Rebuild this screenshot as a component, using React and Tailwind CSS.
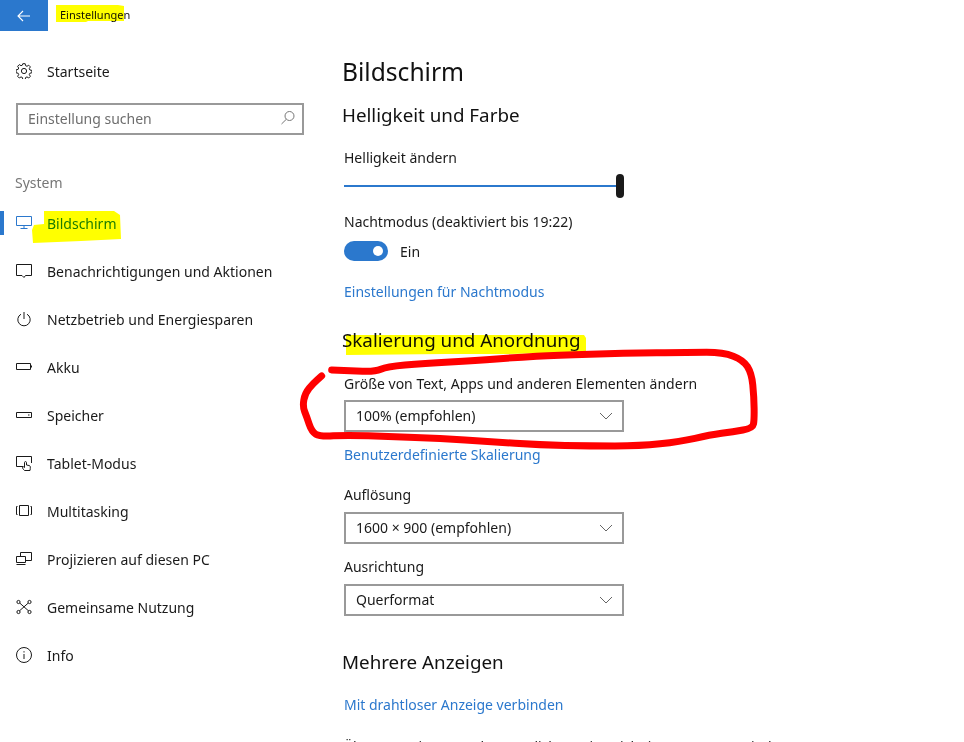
const F = "font-['Noto_Sans','Open_Sans',sans-serif]";

const I = ({ children, className = "text-[#1a1a1a]" }) => (
  <svg viewBox="0 0 16 16" width="16" height="16" fill="none" stroke="currentColor" strokeWidth="1" className={"shrink-0 " + className}>{children}</svg>
);

const icons = {
  display: <I className="text-[#2b78cd]"><path d="M0.5 1.5h15v9h-15zM8 10.5v3M4.5 13.5h7" /></I>,
  note: <I><path d="M0.5 1.5h15v11H9.5l-1.5 2-2-2H0.5z" /></I>,
  power: <I><path d="M8 1v7M5 3.2a6.2 6.2 0 1 0 6 0" /></I>,
  batt: <I><path d="M0.5 4.5h14v6h-14zM15.5 6.5v2" /></I>,
  store: <I><path d="M0.5 5.5h15v5h-15zM12 8h1.5" /></I>,
  tablet: <I><path d="M7 11.5H0.5v-10h15v6.5" /><path d="M8.5 15.5c-1-1-2-2-2-3s1-1 2 0V7.5c0-1.2 2-1.2 2 0v2.5l3 .6c1 .4 1 2 .5 4.9z" fill="#fff" /></I>,
  multi: <I><path d="M3.5 2.5h9v10h-9zM1.5 3.5H0.5v8h1M14.5 3.5h1v8h-1" /></I>,
  proj: <I><path d="M4.5 5V1.5h11v8H10M0.5 5.5h9v6h-9zM0.5 13.5h9" /></I>,
  share: <I><circle cx="2.5" cy="3" r="1.6" /><circle cx="13.5" cy="3" r="1.6" /><circle cx="2.5" cy="13" r="1.6" /><circle cx="13.5" cy="13" r="1.6" /><path d="M3.7 4l9 8M12.3 4l-9 8" /></I>,
  info: <I><circle cx="8" cy="8" r="7.5" /><path d="M8 7v5M8 4.2v1.3" /></I>,
};

const nav = [
  ["display", "Bildschirm", true],
  ["note", "Benachrichtigungen und Aktionen"],
  ["power", "Netzbetrieb und Energiesparen"],
  ["batt", "Akku"],
  ["store", "Speicher"],
  ["tablet", "Tablet-Modus"],
  ["multi", "Multitasking"],
  ["proj", "Projizieren auf diesen PC"],
  ["share", "Gemeinsame Nutzung"],
  ["info", "Info"],
];

const Select = ({ value, className }) => (
  <div className={"flex h-8 w-[280px] items-center justify-between border-2 border-[#999999] pb-[2px] pl-[10px] pr-[9px] text-[14px] text-[#1a1a1a] " + className}>
    <span>{value}</span>
    <svg width="14" height="8" viewBox="0 0 14 8" fill="none" stroke="#666" strokeWidth="1" className="translate-y-px"><path d="M1 1l6 6 6-6" /></svg>
  </div>
);

const Label = ({ children, className }) => <div className={"h-5 text-[14px] leading-[21px] text-[#1a1a1a] whitespace-nowrap " + className}>{children}</div>;
const Lnk = ({ children, className }) => <div className={"h-5 text-[14px] leading-[21px] text-[#2b78cd] whitespace-nowrap " + className}>{children}</div>;
const H2 = ({ children, className }) => <h2 className={"-ml-0.5 h-7 text-[18.8px] leading-7 text-[#111] whitespace-nowrap " + className}>{children}</h2>;

const redPts = [[125,150],[180,152],[255,155],[290,140],[400,130],[560,122],[680,112],[800,105],[1000,100],[1200,97],[1300,97],[1360,120],[1385,160],[1392,230],[1393,300],[1388,325],[1330,335],[1260,345],[1170,365],[1050,378],[900,378],[750,375],[600,365],[450,355],[300,350],[170,345],[90,350],[65,335],[50,290],[38,260],[45,220],[70,190],[95,168]];
const redPath = redPts.reduce((d, p, i) => {
  if (i === 0) return `M${p[0]} ${p[1]}`;
  const q = redPts[i - 1];
  return i === 1 ? d : `${d} Q${q[0]} ${q[1]} ${(q[0] + p[0]) / 2} ${(q[1] + p[1]) / 2}`;
}, "") + ` L95 168`;

export default function App() {
  return (
    <div className={"relative h-[742px] w-[964px] overflow-hidden bg-white " + F}>
      <header className="flex h-[31px] items-center">
        <div className="flex h-[31px] w-12 items-center justify-center bg-[#2b78cd]">
          <svg width="14" height="12" viewBox="0 0 14 12" fill="none" stroke="#fff" strokeWidth="1.1"><path d="M13 6H1M6 1L1 6l5 5" /></svg>
        </div>
        <span className="ml-3 text-[11px] text-[#111]">Einstellungen</span>
      </header>
      <div className="flex">
        <aside className="w-[342px] shrink-0">
          <div className="mt-[24px] flex h-8 items-center gap-[15px] pl-4 text-[14px] text-[#1a1a1a]">
            <svg width="16" height="16" viewBox="0 0 16 16" fill="none" stroke="#1a1a1a" strokeWidth="1" className="shrink-0">
              <circle cx="8" cy="8" r="2.6" />
              <path d="M6.8 0.7h2.4l.4 2 1.4.6 1.7-1.1 1.7 1.7-1.1 1.7.6 1.4 2 .4v2.4l-2 .4-.6 1.4 1.1 1.7-1.7 1.7-1.7-1.1-1.4.6-.4 2H6.8l-.4-2-1.4-.6-1.7 1.1-1.7-1.7 1.1-1.7-.6-1.4-2-.4V6.8l2-.4.6-1.4-1.1-1.7 1.7-1.7 1.7 1.1 1.4-.6z" />
            </svg>
            <span>Startseite</span>
          </div>
          <div className="ml-4 mt-[16px] flex h-8 w-[288px] items-center justify-between border-2 border-[#999999] pb-[2px] pl-[10px] pr-[6px] text-[14px] text-[#6e6e6e]">
            <span>Einstellung suchen</span>
            <svg width="16" height="16" viewBox="0 0 16 16" fill="none" stroke="#777" strokeWidth="1"><circle cx="9.5" cy="6" r="4.5" /><path d="M6.3 9.3L1.5 14" /></svg>
          </div>
          <div className="ml-[15px] mt-[38px] h-5 text-[14px] leading-5 text-[#777]">System</div>
          <nav className="mt-[6px]">
            {nav.map(([icon, label, active]) => (
              <div key={label} className={"flex h-12 items-center gap-[15px] pl-4 text-[14px] " + (active ? "text-[#2b78cd]" : "text-[#1a1a1a]")}>
                {icons[icon]}
                <span className={"whitespace-nowrap " + (active ? "text-[#1d7d10]" : "")}>{label}</span>
              </div>
            ))}
          </nav>
        </aside>
        <main className="min-w-0 flex-1 pl-[2px]">
          <h1 className="-ml-0.5 mt-[21px] h-10 text-[24.6px] leading-10 text-[#111]">Bildschirm</h1>
          <H2 className="mt-[9px]">Helligkeit und Farbe</H2>
          <Label className="mt-[18px]">Helligkeit ändern</Label>
          <div className="relative mt-[7px] flex h-6 w-[280px] items-center">
            <div className="h-0.5 w-full bg-[#2b78cd]" />
            <div className="absolute right-0 top-0 h-6 w-2 rounded-full bg-[#1a1a1a]" />
          </div>
          <Label className="mt-[13px]">Nachtmodus (deaktiviert bis 19:22)</Label>
          <div className="mt-[10px] flex h-5 items-center gap-3 text-[14px] text-[#1a1a1a]">
            <div className="flex h-5 w-11 items-center justify-end rounded-full bg-[#2b78cd] pr-[5px]">
              <div className="h-2.5 w-2.5 rounded-full bg-white" />
            </div>
            <span>Ein</span>
          </div>
          <Lnk className="mt-5">Einstellungen für Nachtmodus</Lnk>
          <H2 className="mt-[25px]">Skalierung und Anordnung</H2>
          <Label className="mt-[19px]">Größe von Text, Apps und anderen Elementen ändern</Label>
          <Select className="mt-[7px]" value="100% (empfohlen)" />
          <Lnk className="mt-3">Benutzerdefinierte Skalierung</Lnk>
          <Label className="mt-5">Auflösung</Label>
          <Select className="mt-2" value="1600 × 900 (empfohlen)" />
          <Label className="mt-3">Ausrichtung</Label>
          <Select className="mt-2" value="Querformat" />
          <H2 className="mt-8">Mehrere Anzeigen</H2>
          <Lnk className="mt-[18px]">Mit drahtloser Anzeige verbinden</Lnk>
          <Label className="mt-[22px]">Ältere Anzeigen werden möglicherweise nicht immer automatisch</Label>
        </main>
      </div>
      <div className="absolute left-0 top-[211px] h-6 w-1 bg-[#2b78cd]" />
      <svg className="pointer-events-none absolute left-0 top-0 mix-blend-multiply" width="964" height="742" fill="none">
        <path d="M56 5h62l6 1v15H88l-2 1H56z" fill="#ffff00" />
        <path d="M44 211h70l6 4 1 24-40 2-48 2-1-13 2-5 10-1z" fill="#ffff00" />
        <path d="M346 335h238l2 3v14l-80 2-60 0-100 1z" fill="#ffff00" />
      </svg>
      <svg className="pointer-events-none absolute left-0 top-0" width="964" height="742" fill="none">
        <g transform="translate(290 320) scale(0.3333)">
          <path d={redPath} stroke="#ff0000" strokeWidth="21" strokeLinecap="round" strokeLinejoin="round" />
        </g>
      </svg>
    </div>
  );
}
